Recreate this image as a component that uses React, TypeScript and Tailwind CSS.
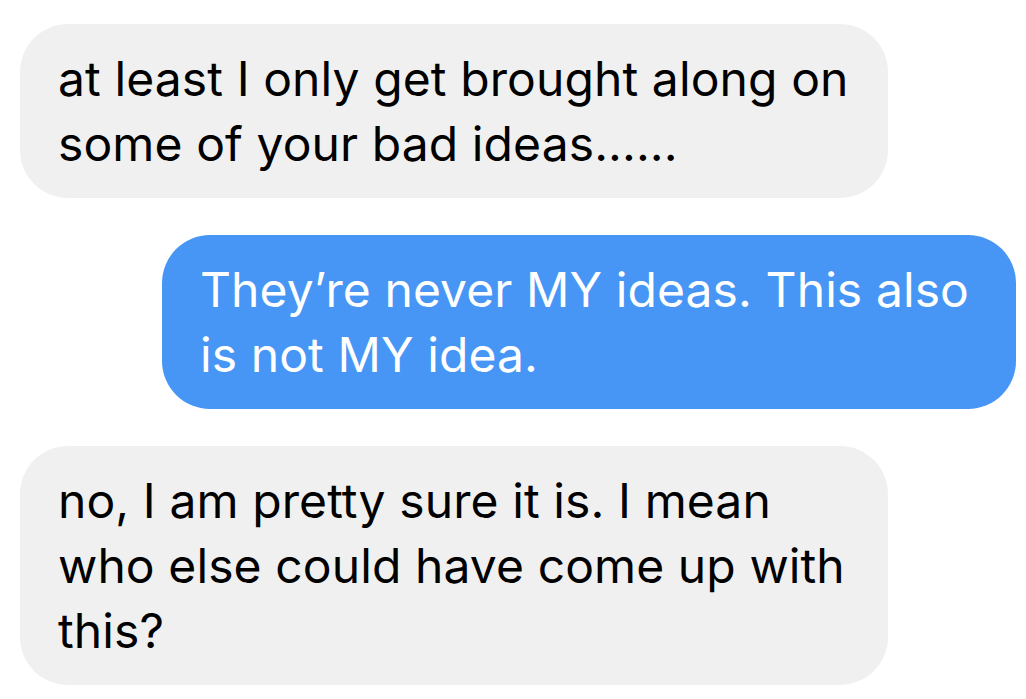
import React from "react";

const font = { fontFamily: '"Inter", "Noto Sans", sans-serif' };

function Bubble({ lines, me }: { lines: string[]; me?: boolean }) {
  return (
    <div
      className={
        "rounded-[48px] py-[22px] px-[38px] text-[48px] leading-[65px] tracking-[0.1px] " +
        (me
          ? "self-end mr-[10px] w-[854px] bg-[#4796f6] text-white"
          : "self-start ml-[20px] w-[868px] bg-[#f0f0f0] text-black")
      }
    >
      {lines.map((l, i) => (
        <div key={i} className="whitespace-nowrap">
          {l}
        </div>
      ))}
    </div>
  );
}

export default function App() {
  return (
    <div className="w-[1026px] h-[699px] bg-white flex flex-col gap-[37px] pt-[24px] overflow-hidden" style={font}>
      <Bubble lines={["at least I only get brought along on", "some of your bad ideas......"]} />
      <Bubble me lines={["They\u2019re never MY ideas. This also", "is not MY idea."]} />
      <Bubble
        lines={[
          "no, I am pretty sure it is. I mean",
          "who else could have come up with",
          "this?",
        ]}
      />
    </div>
  );
}
